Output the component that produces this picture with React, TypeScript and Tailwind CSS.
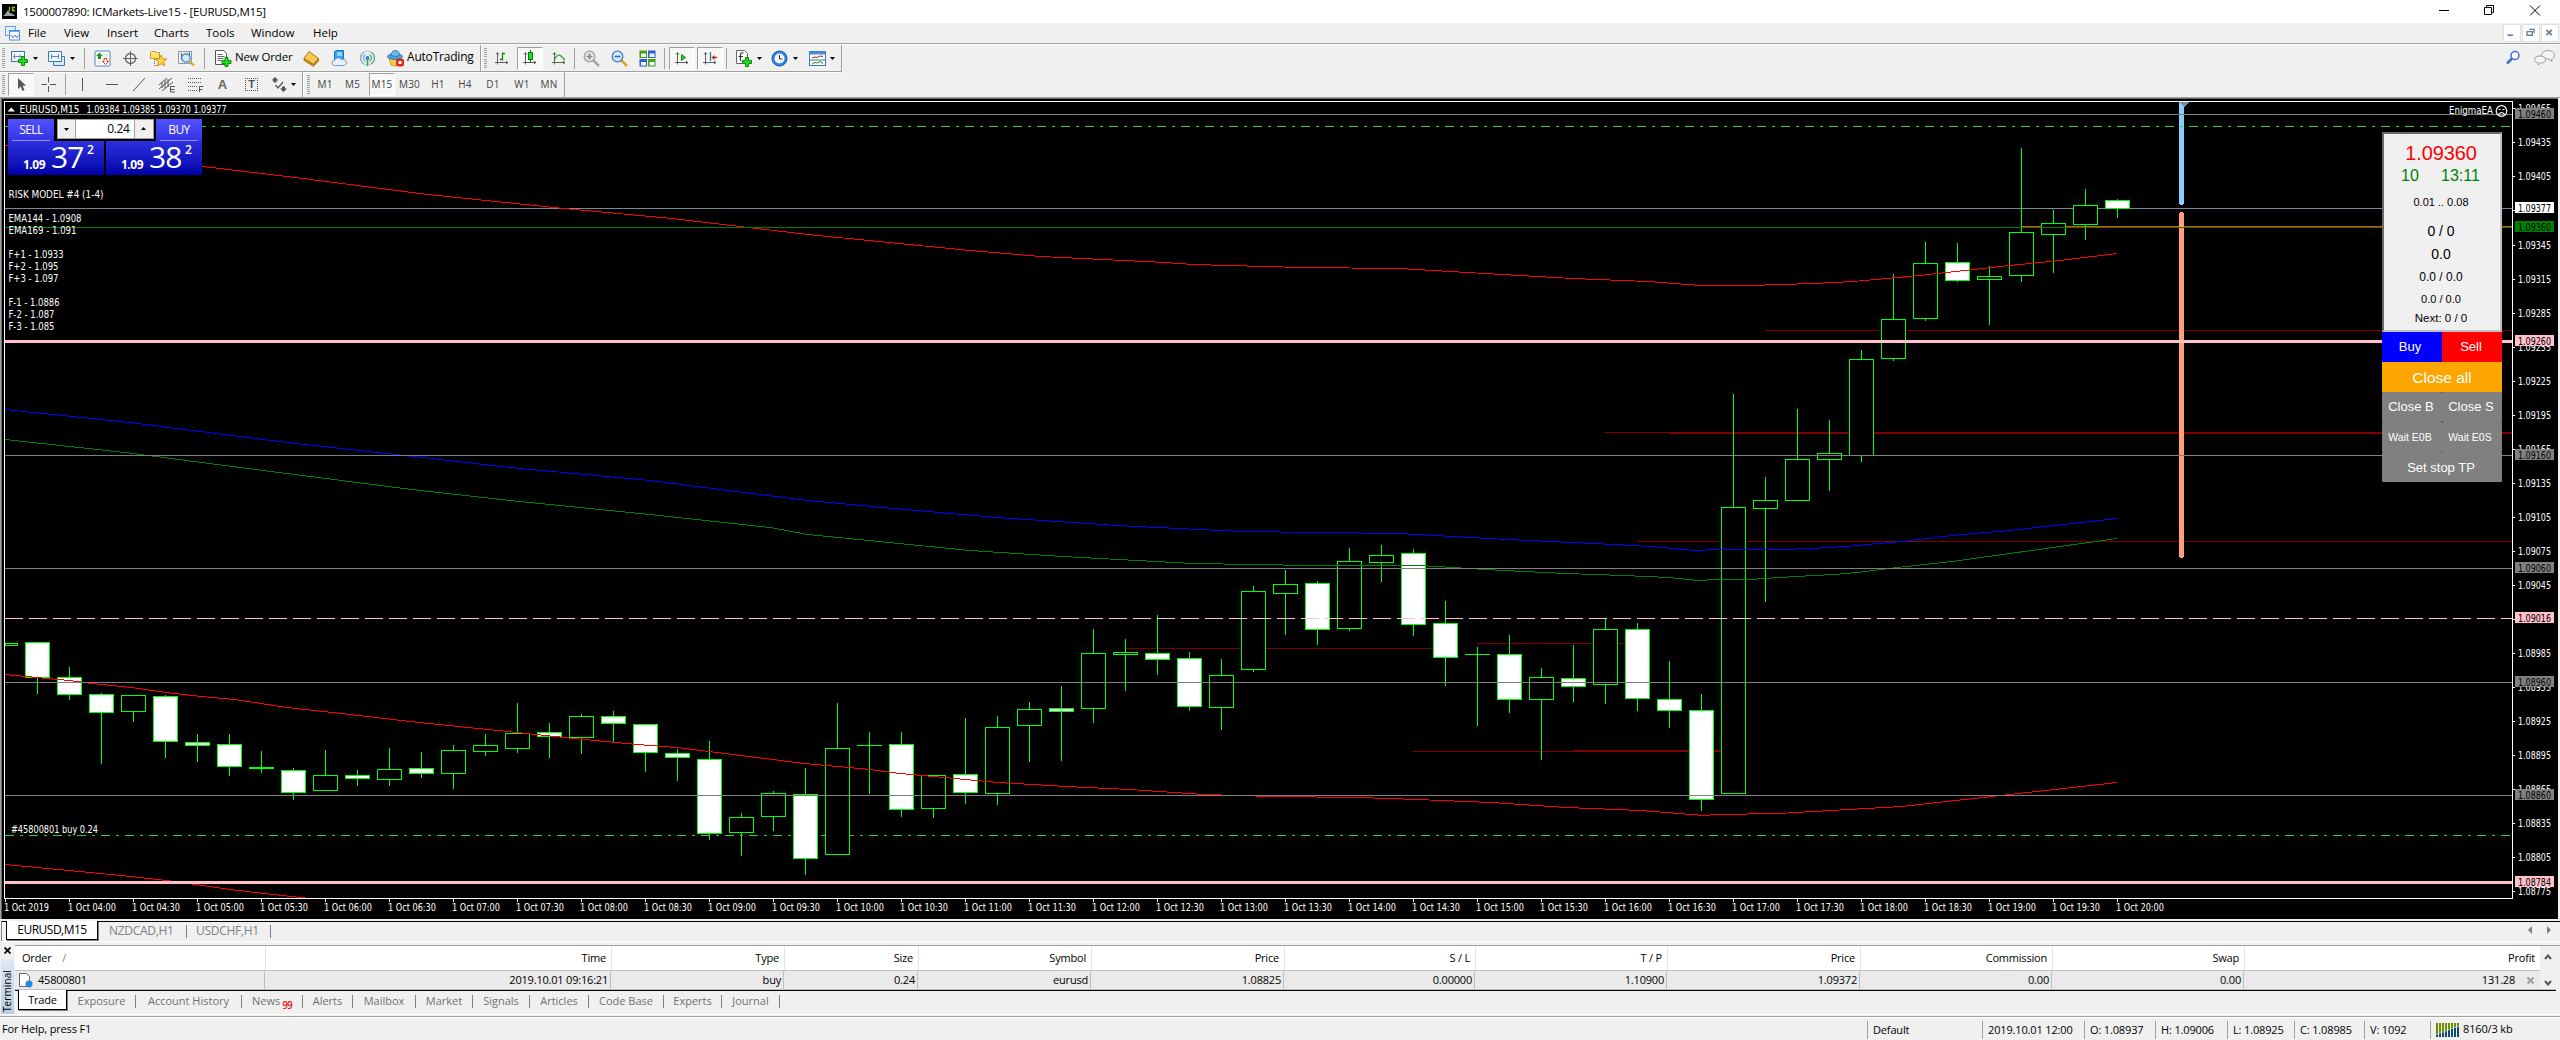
import type { ReactNode } from "react";

// [high, bodyTop, bodyBottom, low, kind]  u = hollow (up), d = filled (down)
type Candle = [number, number, number, number, "u" | "d"];

const CANDLES: Candle[] = [
  [643, 643, 645, 645, "u"],
  [642, 642, 677, 693, "d"],
  [667, 677, 694, 699, "d"],
  [693, 694, 712, 763, "d"],
  [695, 695, 711, 721, "u"],
  [695, 696, 741, 757, "d"],
  [734, 742, 745, 761, "d"],
  [734, 744, 766, 775, "d"],
  [751, 767, 768, 772, "u"],
  [768, 770, 792, 799, "d"],
  [750, 775, 790, 790, "u"],
  [770, 775, 778, 785, "d"],
  [748, 769, 779, 785, "u"],
  [752, 768, 773, 777, "d"],
  [745, 750, 773, 788, "u"],
  [734, 745, 751, 755, "u"],
  [703, 733, 748, 752, "u"],
  [723, 732, 736, 757, "d"],
  [714, 716, 737, 753, "u"],
  [711, 716, 723, 741, "d"],
  [724, 724, 752, 771, "d"],
  [749, 753, 757, 780, "d"],
  [741, 759, 833, 839, "d"],
  [813, 817, 832, 855, "u"],
  [791, 793, 816, 830, "u"],
  [768, 794, 858, 874, "d"],
  [703, 748, 854, 854, "u"],
  [732, 745, 745, 793, "u"],
  [732, 744, 809, 816, "d"],
  [775, 775, 808, 817, "u"],
  [718, 774, 792, 803, "d"],
  [716, 727, 793, 804, "u"],
  [702, 709, 725, 761, "u"],
  [686, 708, 711, 760, "d"],
  [629, 653, 708, 722, "u"],
  [639, 652, 654, 690, "u"],
  [615, 653, 659, 674, "d"],
  [652, 658, 706, 710, "d"],
  [659, 675, 707, 729, "u"],
  [586, 591, 669, 671, "u"],
  [570, 584, 593, 634, "u"],
  [581, 583, 629, 644, "d"],
  [548, 561, 628, 630, "u"],
  [545, 555, 562, 581, "u"],
  [549, 553, 624, 635, "d"],
  [601, 623, 657, 685, "d"],
  [647, 654, 654, 725, "u"],
  [635, 654, 699, 712, "d"],
  [668, 677, 699, 759, "u"],
  [645, 678, 686, 701, "d"],
  [619, 629, 684, 703, "u"],
  [623, 629, 698, 710, "d"],
  [661, 699, 710, 727, "d"],
  [694, 710, 799, 810, "d"],
  [394, 507, 793, 793, "u"],
  [477, 500, 508, 601, "u"],
  [409, 459, 500, 500, "u"],
  [420, 453, 459, 490, "u"],
  [350, 359, 455, 461, "u"],
  [274, 319, 358, 360, "u"],
  [242, 263, 318, 320, "u"],
  [243, 262, 280, 281, "d"],
  [266, 276, 279, 324, "u"],
  [148, 232, 275, 281, "u"],
  [210, 223, 234, 272, "u"],
  [189, 205, 224, 239, "u"],
  [199, 200, 208, 217, "d"],
];

const MOVING_AVERAGES = [
  {
    color: "#f00",
    points:
      "5,145 100,154 203,166 287,176 428,194 564,208 672,218 808,234 970,250 1041,256 1165,262 1193,264 1301,267 1399,268 1485,273 1572,278 1648,281 1674,283 1700,285 1749,285 1813,283 1853,281 1920,275 2010,265 2060,260 2117,253",
  },
  {
    color: "#00f",
    points:
      "5,409 130,422 287,442 396,454 510,467 650,480 808,500 905,509 997,517 1117,525 1241,531 1399,533 1507,539 1615,544 1650,546 1696,550 1717,549 1780,549 1813,548 1845,546 1902,541 1952,535 2010,530 2117,518",
  },
  {
    color: "#008000",
    points:
      "5,439 125,452 271,471 412,489 510,500 650,514 770,527 808,534 970,550 1063,556 1193,563 1312,565 1420,565 1453,567 1503,570 1566,573 1623,575 1669,577 1698,580 1717,579 1749,579 1780,577 1813,575 1835,574 1857,572 1897,567 1952,561 2017,552 2117,538",
  },
  {
    color: "#f00",
    points:
      "5,674 37,677 69,680 92,683 132,687 166,692 201,696 235,699 287,707 324,711 419,722 488,729 517,732 574,738 637,744 677,747 741,755 804,763 870,769 900,773 955,778 998,782 1066,786 1130,789 1204,794 1273,796 1359,797 1417,799 1491,802 1566,807 1641,810 1704,815 1717,814 1778,813 1813,811 1902,806 2010,794 2117,782",
  },
  { color: "#f00", points: "5,864 69,870 121,875 167,880 195,884 230,889 264,893 310,898" },
];

// [x1, x2, y, thickness]
const LEVELS = [
  [1126, 1434, 648, 1],
  [1477, 1626, 643, 1],
  [1413, 1573, 751, 1],
  [1573, 1721, 750, 2],
  [1637, 2512, 541, 1],
  [1605, 1669, 432, 1],
  [1669, 2512, 432, 2],
  [1765, 2512, 330, 1],
];

const PRICE_TAGS = [
  { y: 114, price: "1.09460", bg: "#808080" },
  { y: 208, price: "1.09377", bg: "#ffffff" },
  { y: 227, price: "1.09360", bg: "#008000" },
  { y: 341, price: "1.09260", bg: "#ffc0cb" },
  { y: 455, price: "1.09160", bg: "#808080" },
  { y: 568, price: "1.09060", bg: "#808080" },
  { y: 618, price: "1.09016", bg: "#ffc0cb" },
  { y: 682, price: "1.08960", bg: "#808080" },
  { y: 795, price: "1.08860", bg: "#808080" },
  { y: 882, price: "1.08784", bg: "#ffc0cb" },
];

const COMMENTS: [string, number, number][] = [
  ["RISK MODEL #4 (1-4)", 198, 95],
  ["EMA144 - 1.0908", 222, 73],
  ["EMA169 - 1.091", 234, 68],
  ["F+1 - 1.0933", 258, 55],
  ["F+2 - 1.095", 270, 50],
  ["F+3 - 1.097", 282, 50],
  ["F-1 - 1.0886", 306, 51],
  ["F-2 - 1.087", 318, 46],
  ["F-3 - 1.085", 330, 46],
];

const priceY = (p: number) => 114 + (109460 - p) * 1.135;
const pricesOnAxis = Array.from({ length: 24 }, (_, i) => 109465 - i * 30);
const timeLabels = Array.from({ length: 34 }, (_, i) => {
  if (i === 0) return "1 Oct 2019";
  const m = 210 + i * 30;
  return `1 Oct ${String(Math.floor(m / 60)).padStart(2, "0")}:${m % 60 === 0 ? "00" : "30"}`;
});

function ChartText({ x, y, w, fill = "#fff", children }: { x: number; y: number; w: number; fill?: string; children: string }) {
  return (
    <text x={x} y={y} textLength={w} lengthAdjust="spacingAndGlyphs" fill={fill} className="text-[10px]">
      {children}
    </text>
  );
}

function Chart() {
  return (
    <svg viewBox="0 97 2560 822" className="block h-[822px] w-[2560px] bg-black font-['DejaVu_Sans_Condensed','Noto_Sans',sans-serif]">
      <g shapeRendering="crispEdges">
        <rect x="0" y="97" width="2560" height="1" fill="#a0a0a0" />
        <rect x="0" y="98" width="2560" height="1" fill="#696969" />
        <rect x="0" y="98" width="1" height="821" fill="#a0a0a0" />
        <rect x="1" y="98" width="1" height="821" fill="#696969" />
        <rect x="2558" y="98" width="2" height="821" fill="#f0f0f0" />

        <path d="M5 126.500H2512" stroke="#32cd32" strokeDasharray="9 6 3 6" />
        <path d="M5 835.500H2512" stroke="#32cd32" strokeDasharray="9 6 3 6" />
        <rect x="5" y="208" width="2507" height="1" fill="#778899" />
        {LEVELS.map(([x1, x2, y, t]) => (
          <rect key={`${x1}-${y}`} x={x1} y={y} width={x2 - x1} height={t} fill="#800000" />
        ))}
        <rect x="2022" y="226" width="490" height="1" fill="#ff4500" />

        {CANDLES.map(([high, top, bottom, low, kind], i) => {
          const c = 5 + i * 32;
          const left = Math.max(c - 12, 5);
          return (
            <g key={i}>
              <rect x={c} y={high} width="1" height={low - high + 1} fill="#0f0" />
              <rect x={left} y={top} width={c + 13 - left} height={bottom - top + 1} fill="#0f0" />
              {bottom - top > 1 && (
                <rect
                  x={left + 1}
                  y={top + 1}
                  width={c + 11 - left}
                  height={bottom - top - 1}
                  fill={kind === "d" ? "#fff" : "#000"}
                />
              )}
            </g>
          );
        })}

        <rect x="2179" y="102" width="5" height="102" fill="#87cefa" />
        <rect x="2180" y="204" width="3" height="1" fill="#87cefa" />
        <rect x="2180" y="212" width="3" height="1" fill="#ffa07a" />
        <rect x="2179" y="213" width="5" height="344" fill="#ffa07a" />
        <rect x="2180" y="557" width="3" height="1" fill="#ffa07a" />
        <rect x="2180" y="126" width="3" height="1" fill="#32cd32" />
        <path d="M2180 102h9l-4.500 5z" fill="#778899" />

        {MOVING_AVERAGES.map((ma) => (
          <polyline key={ma.points} points={ma.points} fill="none" stroke={ma.color} transform="translate(0 .5)" />
        ))}

        <rect x="5" y="227" width="2507" height="1" fill="#008000" />
        {[114, 455, 568, 682, 795].map((y) => (
          <rect key={y} x="5" y={y} width="2507" height="1" fill="#808080" />
        ))}
        <path d="M5 618.500H2512" stroke="#ffc0cb" strokeDasharray="18 6" />
        <rect x="5" y="340" width="2508" height="3" fill="#ffc0cb" />
        <rect x="5" y="881" width="2508" height="3" fill="#ffc0cb" />

        <path d="M4.500 899V101.500H2512.500V898.500H4.500" stroke="#fff" fill="none" />
      </g>

      <path d="M7.500 111.500h7.500l-3.750-4z" fill="#fff" />
      <ChartText x={19.5} y={113} w={60}>EURUSD,M15</ChartText>
      <ChartText x={86.5} y={113} w={140}>1.09384 1.09385 1.09370 1.09377</ChartText>
      {COMMENTS.map(([text, y, w]) => (
        <ChartText key={text} x={8.5} y={y} w={w}>
          {text}
        </ChartText>
      ))}
      <ChartText x={11} y={833} w={87}>#45800801 buy 0.24</ChartText>

      <ChartText x={2449} y={114} w={44}>EnigmaEA</ChartText>
      <g stroke="#fff" fill="none" strokeWidth="1.200">
        <circle cx="2501.500" cy="111" r="5.300" />
        <path d="M2498.500 114.500q3-4 6 0M2498.500 109.500h2M2502.500 109.500h2" />
      </g>

      {timeLabels.map((label, i) => (
        <g key={label}>
          <rect x={5 + i * 64} y="899" width="1" height="3" fill="#fff" />
          <ChartText x={4 + i * 64} y={911} w={i === 0 ? 45 : 48}>
            {label}
          </ChartText>
        </g>
      ))}

      {pricesOnAxis.map((p) => (
        <g key={p}>
          <rect x="2513" y={Math.round(priceY(p))} width="2" height="1" fill="#fff" />
          {p !== 109375 && (
            <ChartText x={2518} y={Math.round(priceY(p)) + 4} w={33}>
              {(p / 100000).toFixed(5)}
            </ChartText>
          )}
        </g>
      ))}
      {PRICE_TAGS.map((tag) => (
        <g key={tag.price}>
          <rect x="2515" y={tag.y - 6} width="39" height="11" fill={tag.bg} />
          <ChartText x={2518} y={tag.y + 3.5} w={33} fill="#000">
            {tag.price}
          </ChartText>
        </g>
      ))}
    </svg>
  );
}

function Quote({ big }: { big: string }) {
  return (
    <div className="flex h-[34px] w-[96px] items-start bg-linear-to-b from-[#2e2ee0] to-[#0000a6] pl-[15px] text-white">
      <span className="mt-[17px] w-[28px] text-[12px] leading-[14px] font-bold tracking-[-0.5px]">1.09</span>
      <span className="-mt-[1px] w-[36px] font-['Open_Sans',sans-serif] text-[30px] leading-[34px] tracking-[-1px]">{big}</span>
      <span className="mt-[2px] text-[12px] leading-[13px] font-semibold">2</span>
    </div>
  );
}

function OneClickTrading() {
  return (
    <div className="absolute top-[22px] left-[8px] h-[56px] w-[194px] bg-black font-['Open_Sans',sans-serif]">
      <div className="flex h-[22px] justify-between">
        <div className="flex w-[46px] flex-col items-center bg-linear-to-b from-[#5050ff] to-[#3333e4] pt-[3px]">
          <span className="h-[18px] text-[12px] leading-[15px] tracking-[-0.6px] text-white">SELL</span>
          <span className="h-px w-[38px] bg-[#8c8cff]" />
        </div>
        <div className="flex h-[20px] w-[97px] items-stretch border border-[#a0a0a0] bg-white">
          <div className="flex w-[18px] items-center justify-center border-r border-[#a0a0a0] bg-[#f0f0f0]">
            <DropArrow />
          </div>
          <div className="flex-1 pr-[4px] text-right text-[12px] leading-[17px] tracking-[-0.4px] text-black">0.24</div>
          <div className="flex w-[19px] rotate-180 items-center justify-center border-r border-[#a0a0a0] bg-[#f0f0f0]">
            <DropArrow />
          </div>
        </div>
        <div className="flex w-[46px] flex-col items-center bg-linear-to-b from-[#5050ff] to-[#3333e4] pt-[3px]">
          <span className="h-[18px] text-[12px] leading-[15px] tracking-[-0.6px] text-white">BUY</span>
          <span className="h-px w-[38px] bg-[#8c8cff]" />
        </div>
      </div>
      <div className="flex justify-between">
        <Quote big="37" />
        <Quote big="38" />
      </div>
    </div>
  );
}

function ExpertPanel() {
  return (
    <div className="absolute top-[35px] left-[2382px] w-[120px] bg-black text-center font-['Liberation_Sans',Arial,sans-serif] text-white">
      <div className="flex h-[200px] flex-col border-2 border-t-[#696969] border-r-[#c0c0c0] border-b-[#c0c0c0] border-l-[#696969] bg-[#f0f0f0] pr-[2px] text-black">
        <div className="mt-[8px] h-[23px] text-[20px] leading-[23px] tracking-[-0.1px] text-[red]">1.09360</div>
        <div className="flex h-[21px] text-[16px] leading-[21px] text-[green]">
          <span className="ml-[17px] w-[40px] text-left">10</span>
          <span className="text-left">13:11</span>
        </div>
        <div className="mt-[9px] h-[15px] text-[11px] leading-[15px]">0.01 .. 0.08</div>
        <div className="mt-[12px] h-[18px] text-[14px] leading-[18px]">0 / 0</div>
        <div className="mt-[5px] h-[18px] text-[14px] leading-[18px]">0.0</div>
        <div className="mt-[7px] h-[15px] text-[12px] leading-[15px]">0.0 / 0.0</div>
        <div className="mt-[7px] h-[15px] text-[11px] leading-[15px]">0.0 / 0.0</div>
        <div className="mt-[3px] h-[16px] text-[11.5px] leading-[16px]">Next: 0 / 0</div>
      </div>
      <div className="flex h-[30px] text-[13px] leading-[30px]">
        <div className="w-[60px] bg-[blue] pr-[4px]">Buy</div>
        <div className="w-[60px] bg-[red] pr-[2px]">Sell</div>
      </div>
      <div className="h-[30px] bg-[orange] text-[15.5px] leading-[31px]">Close all</div>
      <div className="flex h-[30px] text-[13px] leading-[30px]">
        <div className="w-[60px] rounded-[1px] bg-[gray] pr-[2px]">Close B</div>
        <div className="w-[60px] rounded-[1px] bg-[gray] pr-[2px]">Close S</div>
      </div>
      <div className="flex h-[30px] text-[10.5px] leading-[30px]">
        <div className="w-[60px] rounded-[1px] bg-[gray] pr-[4px]">Wait E0B</div>
        <div className="w-[60px] rounded-[1px] bg-[gray] pr-[4px]">Wait E0S</div>
      </div>
      <div className="h-[30px] rounded-[1px] bg-[gray] pr-[2px] text-[13px] leading-[31px]">Set stop TP</div>
    </div>
  );
}

function Icon({ size = 17, children }: { size?: number; children: ReactNode }) {
  return (
    <svg width={size} height={size} viewBox={`0 0 ${size} ${size}`} className="shrink-0">
      {children}
    </svg>
  );
}

function DropArrow() {
  return (
    <svg width="5" height="3" viewBox="0 0 5 3" className="shrink-0">
      <path d="M0 0h5L2.500 3z" fill="#000" />
    </svg>
  );
}

function Grip() {
  return (
    <div className="mr-[4px] ml-[2px] flex h-[20px] w-[3px] flex-col justify-between">
      {Array.from({ length: 10 }, (_, i) => (
        <span key={i} className="h-px bg-[#a0a0a0]" />
      ))}
    </div>
  );
}

function Sep({ className }: { className: string }) {
  return <div className={`h-[21px] w-px shrink-0 bg-[#a0a0a0] ${className}`} />;
}

function Cell({ className = "w-[28px]", children }: { className?: string; children: ReactNode }) {
  return <div className={`flex h-[23px] shrink-0 items-center justify-center ${className}`}>{children}</div>;
}

function Pressed({ className = "w-[26px]", children }: { className?: string; children: ReactNode }) {
  return (
    <div
      className={`flex h-[23px] shrink-0 items-center justify-center border border-t-[#a0a0a0] border-r-white border-b-white border-l-[#a0a0a0] bg-[#f8f8f8] ${className}`}
    >
      {children}
    </div>
  );
}

function Plus({ x, y }: { x: number; y: number }) {
  return (
    <path
      transform={`translate(${x} ${y})`}
      d="M3.500 .5h3v3h3v3h-3v3h-3v-3h-3v-3h3z"
      fill="#1fdc1f"
      stroke="#0a8a0a"
    />
  );
}

const axes = <path d="M3.500 3v11.500M1 12.500h12.500M2 4.500l1.500-2 1.500 2M12 11l2 1.500-2 1.500" stroke="#606060" fill="none" />;

function StandardToolbar() {
  return (
    <div className="flex h-[27px] items-center border-b border-[#a0a0a0] shadow-[0_1px_0_#fff]">
      <Grip />
      <Cell className="w-[21px]">
        <Icon>
          <rect x=".5" y="1.500" width="13" height="10" fill="#f4f9ff" stroke="#3c78b4" />
          <path d="M3.500 4v5M2 6.500h9M9 4.500v4" stroke="#5a8cc0" />
          <Plus x={7} y={6} />
        </Icon>
      </Cell>
      <Cell className="w-[11px]">
        <DropArrow />
      </Cell>
      <Cell className="ml-[4px] w-[22px]">
        <Icon>
          <path d="M5.500 6.500h11v9h-11z" fill="#d9e9fa" stroke="#3c78b4" />
          <path d="M.5 1.500h13v10H.5z" fill="#f4f9ff" stroke="#3c78b4" />
          <path d="M3.500 4v5M10.500 4v5M3 6.500h8" stroke="#5a8cc0" />
        </Icon>
      </Cell>
      <Cell className="w-[11px]">
        <DropArrow />
      </Cell>
      <Sep className="mr-[3px] ml-[6px]" />
      <Cell>
        <Icon>
          <rect x="1" y="1" width="15" height="15" rx="1" fill="#fff" stroke="#4d88c4" />
          <path d="M9 4h5M9 6h5M3 11h4M3 13h4" stroke="#c8d8e8" />
          <path d="M5.500 2.500l3.500 3.500H7v3H4V6H2z" fill="#1d9a1d" />
          <path d="M11.500 14.500L8.500 11.500H10V8.500h3v3h1.500z" fill="#fff" stroke="#e04a10" />
        </Icon>
      </Cell>
      <Cell>
        <Icon>
          <circle cx="8.500" cy="8.500" r="5" fill="none" stroke="#666" strokeWidth="1.300" />
          <path d="M8.500 1v15M1 8.500h15" stroke="#666" />
        </Icon>
      </Cell>
      <Cell>
        <Icon>
          <path d="M.5 2.500l1-1h4l1 1h3v6h-9z" fill="#ffe27a" stroke="#c79a20" />
          <path d="M4.500 9v6M4 15.500h4" stroke="#666" strokeDasharray="1 1" />
          <path d="M11 5l1.700 3.700 4 .4-3 2.700.9 4L11 13.800 7.400 15.800l.9-4-3-2.700 4-.4z" fill="#ffd23e" stroke="#b8860b" strokeWidth=".8" />
        </Icon>
      </Cell>
      <Cell>
        <Icon>
          <path d="M.5 1.500h13v12H.5z" fill="#eee" stroke="#8a9aaa" />
          <path d="M3.500 3v7M8.500 3v3M11.500 2v4" stroke="#667" />
          <path d="M11.500 11.500l4.500 4" stroke="#d9a520" strokeWidth="2.200" />
          <circle cx="8" cy="8" r="4.200" fill="#cfe8ffcc" stroke="#4a86c8" strokeWidth="1.200" />
        </Icon>
      </Cell>
      <Sep className="mr-[7px] ml-[4px]" />
      <Cell className="w-[23px]">
        <Icon>
          <path d="M.5 .5h8l3 3v11H.5z" fill="#fff" stroke="#555" />
          <path d="M2.500 4.500h5M2.500 6.500h7M2.500 8.500h6M2.500 10.500h4" stroke="#666" />
          <Plus x={6.5} y={7} />
        </Icon>
      </Cell>
      <div className="w-[62px] pb-[2px] text-[11.5px] whitespace-nowrap tracking-[-0.15px] text-black">New Order</div>
      <Cell>
        <Icon>
          <path d="M1 8.500L6 1.500l9.500 7-5 6z" fill="#f6cb4e" stroke="#a8741a" />
          <path d="M1 8.500l9.500 6 5-5.500v2l-5 5.500L1 10.500z" fill="#d59a26" stroke="#8f5f12" strokeWidth=".7" />
        </Icon>
      </Cell>
      <Cell>
        <Icon>
          <path d="M3.500 1.500l2-1h7v9h-9z" fill="#2ea2ff" stroke="#1471c4" />
          <path d="M6 3h5M6 5h5" stroke="#fff" />
          <path d="M3.500 15.500a2.500 2.500 0 010-5 4 4 0 017-1 3 3 0 013 6z" fill="#e9f0fa" stroke="#7b96bb" />
        </Icon>
      </Cell>
      <Cell>
        <Icon>
          <circle cx="8.500" cy="8" r="7" fill="#e6eef4" stroke="#b5c6d4" />
          <path d="M5 14A7 7 0 015 2M6.500 11.500a4 4 0 010-7" fill="none" stroke="#7aa6cc" strokeWidth="1.200" />
          <path d="M10.500 4.500a4 4 0 010 7M12 2a7 7 0 010 12" fill="none" stroke="#4fae5c" strokeWidth="1.200" />
          <circle cx="8.500" cy="8" r="2" fill="#2d7ee0" />
          <path d="M8.500 9v7" stroke="#33a844" strokeWidth="1.500" />
        </Icon>
      </Cell>
      <Cell>
        <Icon>
          <path d="M2 8h12l-2 7q-4 2-8 0z" fill="#f7cf47" stroke="#b98a1c" strokeWidth=".8" />
          <ellipse cx="8" cy="6.500" rx="7.500" ry="3" fill="#4f9fd8" stroke="#2c6ea8" strokeWidth=".8" />
          <path d="M4 5.500q.5-5 4.500-5t4 5q-4 2-8.500 0z" fill="#6cb8ea" stroke="#2c6ea8" strokeWidth=".8" />
          <rect x="9" y="8.500" width="8" height="8" rx="2.500" fill="#dd2a1b" />
          <rect x="11.500" y="11" width="3" height="3" fill="#fff" />
        </Icon>
      </Cell>
      <div className="-ml-[2px] w-[73px] pb-[2px] text-[12px] whitespace-nowrap tracking-[-0.2px] text-black">AutoTrading</div>
      <div className="h-[26px] w-px bg-[#a0a0a0]" />
      <div className="h-[26px] w-px bg-white" />
      <Grip />
      <Cell className="w-[22px]">
        <Icon size={16}>
          {axes}
          <path d="M8.500 2.500v8M8.500 3.500h2.500M6 9.500h2.500" stroke="#0a8f0a" strokeWidth="1.300" />
        </Icon>
      </Cell>
      <Pressed className="ml-[4px] w-[26px]">
        <Icon size={16}>
          {axes}
          <path d="M8.500 0v12" stroke="#0a7a0a" />
          <rect x="6.500" y="2.500" width="4" height="7" fill="#22dd33" stroke="#0a7a0a" />
        </Icon>
      </Pressed>
      <Cell className="w-[31px]">
        <Icon size={16}>
          {axes}
          <path d="M3 10q4-7 7-4l4 4" fill="none" stroke="#2aa02a" strokeWidth="1.200" />
        </Icon>
      </Cell>
      <Sep className="mr-[2px]" />
      <Cell>
        <Icon>
          <path d="M10 10l6 6" stroke="#a8a8a8" strokeWidth="2.500" />
          <circle cx="6.500" cy="6.500" r="5.300" fill="#e8e8e8" stroke="#a0a0a0" strokeWidth="1.300" />
          <path d="M3.500 6.500h6M6.500 3.500v6" stroke="#888" strokeWidth="1.600" />
        </Icon>
      </Cell>
      <Cell>
        <Icon>
          <path d="M10 10l6 6" stroke="#d9a520" strokeWidth="2.500" />
          <circle cx="6.500" cy="6.500" r="5.300" fill="#d5ecff" stroke="#3d82c4" strokeWidth="1.300" />
          <path d="M3.500 6.500h6" stroke="#2b6ea8" strokeWidth="1.600" />
        </Icon>
      </Cell>
      <Cell>
        <Icon>
          <path d="M.5 .5h7.500v7.500H.5zM9 9h7.500v7.500H9z" fill="#46a010" />
          <path d="M9 .5h7.500v7.500H9zM.5 9h7.500v7.500H.5z" fill="#2d5fd0" />
          <path d="M2 3.500h5V7H2zM10.500 3.500h5V7h-5zM2 12h5v3.500H2zM10.500 12h5v3.500h-5z" fill="#eef6ff" />
        </Icon>
      </Cell>
      <Sep className="ml-[3px]" />
      <Pressed className="ml-[4px] w-[26px]">
        <Icon size={16}>
          {axes}
          <path d="M7.500 4.500v6l4-3z" fill="#2fd02f" stroke="#0a8f0a" />
        </Icon>
      </Pressed>
      <Pressed className="ml-[2px] w-[26px]">
        <Icon size={16}>
          {axes}
          <path d="M8.500 2v9" stroke="#2b6ea8" strokeWidth="1.300" />
          <path d="M9.500 7.500l3-2.500v1.700H15v1.600h-2.500V10z" fill="#c03010" />
        </Icon>
      </Pressed>
      <Sep className="ml-[3px]" />
      <Cell className="ml-[5px] w-[24px]">
        <Icon>
          <path d="M.5 .5h8l3 3v10H.5z" fill="#fff" stroke="#666" />
          <path d="M7.500 3q-3-1-3 2v6M2.500 6.500h4.500" fill="none" stroke="#333" strokeWidth="1.200" />
          <Plus x={6} y={7} />
        </Icon>
      </Cell>
      <Cell className="w-[6px]">
        <DropArrow />
      </Cell>
      <Cell className="ml-[4px] w-[27px]">
        <Icon>
          <circle cx="8.500" cy="8.500" r="7.500" fill="#2b86e8" stroke="#0f4fa0" />
          <circle cx="8.500" cy="8.500" r="5" fill="#f4f8fc" />
          <path d="M8.500 5v4h3" fill="none" stroke="#333" />
        </Icon>
      </Cell>
      <Cell className="w-[5px]">
        <DropArrow />
      </Cell>
      <Cell className="ml-[6px] w-[26px]">
        <Icon>
          <rect x=".5" y="1.500" width="16" height="14" fill="#fff" stroke="#3c78b4" />
          <path d="M.5 1.500h16v3H.5z" fill="#4d8ed0" />
          <path d="M1 10h15" stroke="#3c78b4" />
          <path d="M3 8l3-1 2 .5L11 6l3 .5" fill="none" stroke="#a03010" />
          <path d="M3 14l3-1.500 2 .5 3-1.500 3 2" fill="none" stroke="#209020" />
        </Icon>
      </Cell>
      <Cell className="w-[5px]">
        <DropArrow />
      </Cell>
      <div className="ml-[6px] h-[26px] w-px bg-[#a0a0a0]" />
    </div>
  );
}

const TIMEFRAMES: [string, string][] = [
  ["M1", "w-[22px]"],
  ["M5", "w-[33px]"],
  ["M15", "w-[26px]"],
  ["M30", "w-[29px]"],
  ["H1", "w-[28px]"],
  ["H4", "w-[26px]"],
  ["D1", "w-[30px]"],
  ["W1", "w-[28px]"],
  ["MN", "w-[26px]"],
];

function LineStudiesToolbar() {
  return (
    <div className="flex h-[25px] items-center">
      <Grip />
      <Pressed className="-ml-px w-[26px]">
        <Icon>
          <path d="M5 2v11l2.500-2.500 2 4.500 2-1-2-4.300H13z" fill="#555" />
        </Icon>
      </Pressed>
      <Cell>
        <Icon>
          <path d="M8.500 1v5.500M8.500 10v6M1.500 8.500H7M10 8.500h6" stroke="#555" />
        </Icon>
      </Cell>
      <Sep className="ml-[3px]" />
      <Cell className="ml-[2px] w-[29px]">
        <Icon>
          <path d="M8.500 2v13" stroke="#555" />
        </Icon>
      </Cell>
      <Cell>
        <Icon>
          <path d="M3 8.500h12" stroke="#555" />
        </Icon>
      </Cell>
      <Cell>
        <Icon>
          <path d="M2 15L14 2" stroke="#555" />
        </Icon>
      </Cell>
      <Cell>
        <Icon>
          <path d="M0 13L13 2M0 9L8 2M3 15L14 6M3 6v6M6 4v8M9 3v8" stroke="#555" />
          <path d="M16 10.500h-4.500v5.500h4.500M11.500 13.500h4" stroke="#555" fill="none" />
        </Icon>
      </Cell>
      <Cell>
        <Icon>
          <path d="M1 2.500h14M1 6.500h14M1 10.500h9M1 14.500h9" stroke="#555" strokeDasharray="1 1" />
          <path d="M12.500 16v-5.500h4M12.500 13.500h3" stroke="#555" fill="none" />
        </Icon>
      </Cell>
      <Cell className="w-[27px]">
        <span className="font-['Liberation_Sans',sans-serif] text-[13px] font-bold text-[#666]">A</span>
      </Cell>
      <Cell className="w-[31px]">
        <div className="flex h-[13px] w-[13px] items-center justify-center border border-dotted border-[#555] font-['Liberation_Sans',sans-serif] text-[11px] leading-[11px] font-bold text-[#555]">
          T
        </div>
      </Cell>
      <Cell className="w-[24px]">
        <Icon>
          <path d="M4 1l3.500 3.500H5.500v2h-3v-2H.5zM12.500 16L9 12.500h2v-2h3v2h2z" fill="#555" />
          <path d="M4.500 9l2.500 3L12 6" fill="none" stroke="#555" strokeWidth="1.300" />
        </Icon>
      </Cell>
      <Cell className="w-[5px]">
        <DropArrow />
      </Cell>
      <div className="ml-[6px] h-[25px] w-px bg-[#a0a0a0]" />
      <div className="mr-px h-[25px] w-px bg-white" />
      <Grip />
      <div className="flex items-center text-[10px] tracking-[0.2px] text-[#444]">
        {TIMEFRAMES.map(([name, width]) =>
          name === "M15" ? (
            <Pressed key={name} className={width}>
              {name}
            </Pressed>
          ) : (
            <Cell key={name} className={width}>
              {name}
            </Cell>
          )
        )}
      </div>
      <div className="ml-[2px] h-[25px] w-px bg-[#a0a0a0]" />
    </div>
  );
}

const MENU: [string, string][] = [
  ["File", "w-[36px]"],
  ["View", "w-[43px]"],
  ["Insert", "w-[47px]"],
  ["Charts", "w-[52px]"],
  ["Tools", "w-[45px]"],
  ["Window", "w-[62px]"],
  ["Help", "w-[40px]"],
];

function Header() {
  return (
    <>
      <div className="flex h-[23px] items-center bg-white">
        <svg width="15" height="15" viewBox="0 0 15 15" className="mr-[6px] ml-[2px]">
          <rect width="15" height="15" fill="#000" />
          <path d="M1 12q3-2 5-6l2 3q3 0 5 3z" fill="#9aa6a0" />
          <path d="M7.500 3v4M13 3.500h-2.500v3H13" stroke="#8ccf1e" fill="none" strokeWidth="1.300" />
        </svg>
        <span className="text-[11.5px] tracking-[-0.22px] text-black">1500007890: ICMarkets-Live15 - [EURUSD,M15]</span>
        <svg width="121" height="23" viewBox="2439 0 121 23" className="ml-auto" stroke="#000" fill="none">
          <path d="M2439 10.500h10" />
          <path d="M2484.500 7.500h7v7h-7zM2486.500 7.500v-2h7v7h-2" />
          <path d="M2530 5.500l10 10M2540 5.500l-10 10" />
        </svg>
      </div>
      <div className="flex h-[21px] items-center border-b border-[#a0a0a0] text-[11.5px] text-black shadow-[0_1px_0_#fff]">
        <svg width="15" height="15" viewBox="0 0 15 15" className="mr-[8px] ml-[5px]">
          <rect x=".5" y=".5" width="10" height="9" fill="#e6f1ff" stroke="#6b9fe6" />
          <rect x="4.500" y="4.500" width="10" height="9.500" fill="#fff" stroke="#4d88dd" />
          <path d="M4 5h11" stroke="#4d88dd" strokeWidth="1.500" />
          <path d="M6 9l2 3 2-3 2 3 1.500-3" fill="none" stroke="#4d88dd" />
        </svg>
        {MENU.map(([name, width]) => (
          <span key={name} className={width}>
            {name}
          </span>
        ))}
        <div className="ml-auto flex gap-px pr-px">
          <MdiButton>
            <path d="M4 11.500h6" strokeWidth="2" />
          </MdiButton>
          <MdiButton>
            <path d="M4.500 7.500h6v4h-6zM7 5h5.500v4" strokeWidth="1.500" />
          </MdiButton>
          <MdiButton>
            <path d="M5 5.500l6 6M11 5.500l-6 6" strokeWidth="2" />
          </MdiButton>
        </div>
      </div>
      <div className="flex h-[53px] justify-between pt-px">
        <div>
          <StandardToolbar />
          <LineStudiesToolbar />
        </div>
        <div className="flex gap-[14px] pt-[5px] pr-[5px]">
          <svg width="14" height="15" viewBox="0 0 14 15">
            <circle cx="9" cy="5.500" r="4" fill="#fff" stroke="#3b6fd6" strokeWidth="1.500" />
            <path d="M6 8.500L1 13.500" stroke="#3b6fd6" strokeWidth="2.500" />
          </svg>
          <svg width="21" height="17" viewBox="0 0 21 17" stroke="#9a9aa2" fill="#f3f3f6">
            <path d="M14 .5c4 0 6.500 2 6.500 4.500 0 2-1.500 3.500-3 4l.5 2.500-3-2.500c-5 0-7.500-2-7.500-4S10 .5 14 .5z" />
            <path d="M6 6c3 0 5.500 1.200 5.500 3.500S9.500 13 6.500 13L4 15v-2.300C2 12.500.5 11 .5 9.500.5 7.500 3 6 6 6z" />
          </svg>
        </div>
      </div>
    </>
  );
}

function MdiButton({ children }: { children: ReactNode }) {
  return (
    <svg width="18" height="18" viewBox="0 0 18 18" className="border border-[#e0e0e0] bg-white" stroke="#6d7f92" fill="none">
      {children}
    </svg>
  );
}

function ChartTabs() {
  return (
    <div className="flex h-[22px] items-start bg-[#f0f0f0] pt-[2px] text-[12px] text-[#808080]">
      <div className="ml-[1px] h-[20px] w-px bg-[#808080]" />
      <div className="flex h-full flex-1 items-start border-t border-black">
        <div className="-mt-px ml-[4px] flex h-[19px] w-[92px] justify-center border border-t-0 border-black bg-white leading-[18px] tracking-[-0.5px] text-black shadow-[1px_1px_0_#808080]">
          EURUSD,M15
        </div>
        <div className="ml-[11px] w-[77px] leading-[17px] tracking-[-0.3px]">NZDCAD,H1</div>
        <div className="mt-[3px] h-[13px] w-px bg-[#808080]" />
        <div className="ml-[9px] w-[74px] leading-[17px] tracking-[-0.3px]">USDCHF,H1</div>
        <div className="mt-[3px] h-[13px] w-px bg-[#808080]" />
        <svg width="24" height="8" viewBox="0 0 24 8" className="mt-[4px] mr-[8px] ml-auto" fill="#808080">
          <path d="M4 0v8L0 4zM19 0v8l4-4z" />
        </svg>
      </div>
    </div>
  );
}

const COLUMNS = [
  { title: "Time", value: "2019.10.01 09:16:21", width: "w-[346px]" },
  { title: "Type", value: "buy", width: "w-[173px]" },
  { title: "Size", value: "0.24", width: "w-[134px]" },
  { title: "Symbol", value: "eurusd", width: "w-[173px]" },
  { title: "Price", value: "1.08825", width: "w-[193px]" },
  { title: "S / L", value: "0.00000", width: "w-[191px]" },
  { title: "T / P", value: "1.10900", width: "w-[192px]" },
  { title: "Price", value: "1.09372", width: "w-[193px]" },
  { title: "Commission", value: "0.00", width: "w-[192px]" },
  { title: "Swap", value: "0.00", width: "w-[192px]" },
];

const TERMINAL_TABS: [string, string][] = [
  ["Exposure", "w-[68px]"],
  ["Account History", "w-[106px]"],
  ["News", "w-[61px]"],
  ["Alerts", "w-[50px]"],
  ["Mailbox", "w-[63px]"],
  ["Market", "w-[57px]"],
  ["Signals", "w-[57px]"],
  ["Articles", "w-[59px]"],
  ["Code Base", "w-[75px]"],
  ["Experts", "w-[58px]"],
  ["Journal", "w-[58px]"],
];

function Terminal() {
  return (
    <div className="flex h-[73px] border-t border-white bg-[#f0f0f0] pt-[3px]">
      <div className="flex w-[15px] flex-col items-center">
        <svg width="7" height="7" viewBox="0 0 7 7" className="mt-[2px] mb-[5px]" stroke="#000" strokeWidth="1.700">
          <path d="M.5 .5l6 6M6.500 .5l-6 6" />
        </svg>
        <div className="flex h-[55px] w-[13px] items-end justify-center bg-linear-to-b from-[#dce9f5] to-[#b9cde2] pb-[2px]">
          <span className="rotate-180 text-[10px] leading-[13px] tracking-[0.1px] text-black [writing-mode:vertical-rl]">Terminal</span>
        </div>
      </div>
      <div className="min-w-0 flex-1">
        <div className="flex border-t border-[#a0a0a0]">
          <div className="min-w-0 flex-1 text-[11px] tracking-[-0.2px] text-black">
            <div className="flex h-[24px] bg-white leading-[23px]">
              <div className="w-[251px] border-r border-[#e5e5e5] pl-[7px]">
                Order <span className="ml-[8px] text-[#808080]">/</span>
              </div>
              {COLUMNS.map((c, i) => (
                <div key={i} className={`border-r border-[#e5e5e5] pr-[5px] text-right ${c.width}`}>
                  {c.title}
                </div>
              ))}
              <div className="flex-1 pr-[5px] text-right">Profit</div>
            </div>
            <div className="flex h-[20px] border-y border-[#c0c0c0] bg-[#eaeaea] leading-[18px]">
              <div className="flex w-[250px] border-r border-[#c0c0c0] pl-[3px]">
                <svg width="15" height="16" viewBox="0 0 15 16" className="mt-[1px] mr-[5px]">
                  <path d="M1.500 1.500h7l3 3v10h-10z" fill="#fff" stroke="#666" />
                  <circle cx="11" cy="12" r="3.500" fill="#1e88e5" />
                </svg>
                45800801
              </div>
              {COLUMNS.map((c, i) => (
                <div key={i} className={`border-r border-[#c0c0c0] pr-[2px] text-right ${c.width}`}>
                  {c.value}
                </div>
              ))}
              <div className="flex flex-1 items-center justify-end pr-[6px]">
                131.28
                <svg width="7" height="7" viewBox="0 0 7 7" className="ml-[12px]" stroke="#a0a0a0" strokeWidth="2">
                  <path d="M.5 .5l6 6M6.500 .5l-6 6" />
                </svg>
              </div>
            </div>
          </div>
          <div className="flex w-[20px] flex-col items-center justify-between pt-[8px] pr-[4px] pb-[4px]">
            <svg width="8" height="6" viewBox="0 0 8 6" fill="none" stroke="#555" strokeWidth="2">
              <path d="M1 5l3-3.500L7 5" />
            </svg>
            <svg width="8" height="6" viewBox="0 0 8 6" fill="none" stroke="#555" strokeWidth="2">
              <path d="M1 1l3 3.500L7 1" />
            </svg>
          </div>
        </div>
        <div className="mr-[4px] flex h-[22px] items-start border-t border-black bg-[#f0f0f0] text-[11px] text-[#707070] shadow-[0_-1px_0_#c0c0c0]">
          <div className="-mt-px ml-[3px] h-[20px] w-[49px] border border-t-0 border-black bg-white text-center leading-[19px] tracking-[-0.2px] text-black shadow-[1px_1px_0_#808080]">
            Trade
          </div>
          <div className="w-[1px]" />
          {TERMINAL_TABS.map(([name, width]) => (
            <div key={name} className={`flex shrink-0 items-start justify-center ${width}`}>
              <span className="flex-1 text-center leading-[19px]">
                {name}
                {name === "News" && <span className="relative top-[4px] ml-[2px] text-[10px] font-semibold tracking-[-0.8px] text-[#e81123]">99</span>}
              </span>
              <span className="mt-[4px] h-[13px] w-px bg-[#808080]" />
            </div>
          ))}
        </div>
      </div>
    </div>
  );
}

const STATUS: [string, string][] = [
  ["Default", "w-[115px]"],
  ["2019.10.01 12:00", "w-[102px]"],
  ["O: 1.08937", "w-[71px]"],
  ["H: 1.09006", "w-[72px]"],
  ["L: 1.08925", "w-[67px]"],
  ["C: 1.08985", "w-[70px]"],
  ["V: 1092", "w-[66px]"],
];

function StatusBar() {
  return (
    <div className="flex h-[26px] flex-col border-t border-white bg-[#f0f0f0] pt-px">
      <div className="flex flex-1 items-center border-t border-[#a0a0a0] pt-[2px] text-[11px] tracking-[-0.15px] text-black shadow-[inset_0_1px_0_#fff]">
        <span className="flex-1 pl-[2px]">For Help, press F1</span>
        {STATUS.map(([text, width]) => (
          <span key={text} className={`h-[18px] border-l border-[#a0a0a0] pl-[5px] leading-[18px] whitespace-nowrap ${width}`}>
            {text}
          </span>
        ))}
        <span className="flex h-[18px] w-[130px] items-center border-l border-[#a0a0a0] pl-[5px]">
          <svg width="23" height="14" viewBox="0 0 23 14" className="mr-[4px]">
            {Array.from({ length: 8 }, (_, i) => (
              <g key={i}>
                <rect x={i * 3} y="0" width="2" height={11 - i * 1.1} fill="#6b8e00" />
                <rect x={i * 3} y={11.5 - i * 1.1} width="2" height={2.5 + i * 1.1} fill="#0f4a75" />
              </g>
            ))}
          </svg>
          8160/3 kb
        </span>
      </div>
    </div>
  );
}

export default function App() {
  return (
    <div className="flex h-[1040px] w-[2560px] flex-col overflow-hidden bg-[#f0f0f0] font-['Open_Sans','Noto_Sans',sans-serif]">
      <Header />
      <div className="relative h-[822px] shrink-0">
        <Chart />
        <OneClickTrading />
        <ExpertPanel />
      </div>
      <ChartTabs />
      <Terminal />
      <StatusBar />
    </div>
  );
}
